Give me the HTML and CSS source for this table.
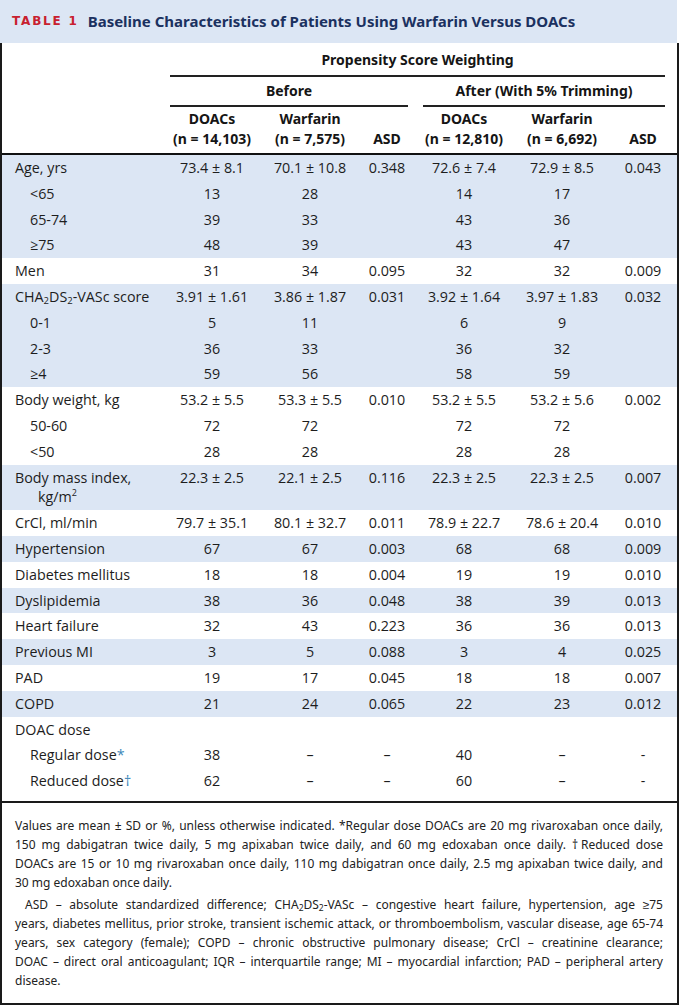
FILE: index.html
```html
<!DOCTYPE html>
<html lang="en">
<head>
<meta charset="utf-8">
<title>Table 1</title>
<link rel="stylesheet" href="styles.css">
</head>
<body>
<div class="page">
  <div class="title-band">
    <span class="t-label">TABLE 1</span>
    <span class="t-text">Baseline Characteristics of Patients Using Warfarin Versus DOACs</span>
  </div>
  <div class="frame">
    <table class="data">
      <colgroup>
        <col class="c-label"><col class="c-n"><col class="c-w"><col class="c-asd"><col class="c-w"><col class="c-n"><col class="c-asd2">
      </colgroup>
      <thead>
        <tr class="h1">
          <th></th>
          <th colspan="6"><div class="grp grp-all">Propensity Score Weighting</div></th>
        </tr>
        <tr class="h2">
          <th></th>
          <th colspan="3"><div class="grp grp-before">Before</div></th>
          <th colspan="3"><div class="grp grp-after">After (With 5% Trimming)</div></th>
        </tr>
        <tr class="h3">
          <th></th>
          <th>DOACs<br>(n = 14,103)</th>
          <th>Warfarin<br>(n = 7,575)</th>
          <th class="asd">ASD</th>
          <th>DOACs<br>(n = 12,810)</th>
          <th>Warfarin<br>(n = 6,692)</th>
          <th class="asd">ASD</th>
        </tr>
      </thead>
      <tbody>
        <tr class="blue"><td class="lab">Age, yrs</td><td>73.4 ± 8.1</td><td>70.1 ± 10.8</td><td>0.348</td><td>72.6 ± 7.4</td><td>72.9 ± 8.5</td><td>0.043</td></tr>
        <tr class="blue"><td class="lab sub">&lt;65</td><td>13</td><td>28</td><td></td><td>14</td><td>17</td><td></td></tr>
        <tr class="blue"><td class="lab sub">65-74</td><td>39</td><td>33</td><td></td><td>43</td><td>36</td><td></td></tr>
        <tr class="blue"><td class="lab sub">≥75</td><td>48</td><td>39</td><td></td><td>43</td><td>47</td><td></td></tr>
        <tr><td class="lab">Men</td><td>31</td><td>34</td><td>0.095</td><td>32</td><td>32</td><td>0.009</td></tr>
        <tr class="blue"><td class="lab">CHA<sub>2</sub>DS<sub>2</sub>-VASc score</td><td>3.91 ± 1.61</td><td>3.86 ± 1.87</td><td>0.031</td><td>3.92 ± 1.64</td><td>3.97 ± 1.83</td><td>0.032</td></tr>
        <tr class="blue"><td class="lab sub">0-1</td><td>5</td><td>11</td><td></td><td>6</td><td>9</td><td></td></tr>
        <tr class="blue"><td class="lab sub">2-3</td><td>36</td><td>33</td><td></td><td>36</td><td>32</td><td></td></tr>
        <tr class="blue"><td class="lab sub">≥4</td><td>59</td><td>56</td><td></td><td>58</td><td>59</td><td></td></tr>
        <tr><td class="lab">Body weight, kg</td><td>53.2 ± 5.5</td><td>53.3 ± 5.5</td><td>0.010</td><td>53.2 ± 5.5</td><td>53.2 ± 5.6</td><td>0.002</td></tr>
        <tr><td class="lab sub">50-60</td><td>72</td><td>72</td><td></td><td>72</td><td>72</td><td></td></tr>
        <tr><td class="lab sub">&lt;50</td><td>28</td><td>28</td><td></td><td>28</td><td>28</td><td></td></tr>
        <tr class="blue"><td class="lab">Body mass index,<br><span class="cont">kg/m<sup>2</sup></span></td><td>22.3 ± 2.5</td><td>22.1 ± 2.5</td><td>0.116</td><td>22.3 ± 2.5</td><td>22.3 ± 2.5</td><td>0.007</td></tr>
        <tr><td class="lab">CrCl, ml/min</td><td>79.7 ± 35.1</td><td>80.1 ± 32.7</td><td>0.011</td><td>78.9 ± 22.7</td><td>78.6 ± 20.4</td><td>0.010</td></tr>
        <tr class="blue"><td class="lab">Hypertension</td><td>67</td><td>67</td><td>0.003</td><td>68</td><td>68</td><td>0.009</td></tr>
        <tr><td class="lab">Diabetes mellitus</td><td>18</td><td>18</td><td>0.004</td><td>19</td><td>19</td><td>0.010</td></tr>
        <tr class="blue"><td class="lab">Dyslipidemia</td><td>38</td><td>36</td><td>0.048</td><td>38</td><td>39</td><td>0.013</td></tr>
        <tr><td class="lab">Heart failure</td><td>32</td><td>43</td><td>0.223</td><td>36</td><td>36</td><td>0.013</td></tr>
        <tr class="blue"><td class="lab">Previous MI</td><td>3</td><td>5</td><td>0.088</td><td>3</td><td>4</td><td>0.025</td></tr>
        <tr><td class="lab">PAD</td><td>19</td><td>17</td><td>0.045</td><td>18</td><td>18</td><td>0.007</td></tr>
        <tr class="blue"><td class="lab">COPD</td><td>21</td><td>24</td><td>0.065</td><td>22</td><td>23</td><td>0.012</td></tr>
        <tr><td class="lab">DOAC dose</td><td></td><td></td><td></td><td></td><td></td><td></td></tr>
        <tr><td class="lab sub">Regular dose<span class="fn">*</span></td><td>38</td><td>–</td><td>–</td><td>40</td><td>–</td><td>-</td></tr>
        <tr><td class="lab sub">Reduced dose<span class="fn">†</span></td><td>62</td><td>–</td><td>–</td><td>60</td><td>–</td><td>-</td></tr>
      </tbody>
    </table>
    <div class="notes">
      <p class="para">
        <span class="ln">Values are mean ± SD or %, unless otherwise indicated. *Regular dose DOACs are 20 mg rivaroxaban once daily,</span>
        <span class="ln">150 mg dabigatran twice daily, 5 mg apixaban twice daily, and 60 mg edoxaban once daily. †Reduced dose</span>
        <span class="ln">DOACs are 15 or 10 mg rivaroxaban once daily, 110 mg dabigatran once daily, 2.5 mg apixaban twice daily, and</span>
        <span class="ln last">30 mg edoxaban once daily.</span>
      </p>
      <p class="para para2">
        <span class="ln first">ASD – absolute standardized difference; CHA<sub>2</sub>DS<sub>2</sub>-VASc – congestive heart failure, hypertension, age ≥75</span>
        <span class="ln">years, diabetes mellitus, prior stroke, transient ischemic attack, or thromboembolism, vascular disease, age 65-74</span>
        <span class="ln">years, sex category (female); COPD – chronic obstructive pulmonary disease; CrCl – creatinine clearance;</span>
        <span class="ln">DOAC – direct oral anticoagulant; IQR – interquartile range; MI – myocardial infarction; PAD – peripheral artery</span>
        <span class="ln last">disease.</span>
      </p>
    </div>
  </div>
</div>
</body>
</html>
```

FILE: styles.css
```css
html, body {
  margin: 0;
  padding: 0;
  background: #ffffff;
}
body {
  font-family: "Open Sans", "Noto Sans", sans-serif;
  color: #1d1d1d;
}
.page {
  width: 679px;
}
.title-band {
  width: 677px;
  height: 43px;
  box-sizing: border-box;
  background: #dce6f4;
  display: flex;
  align-items: center;
  gap: 9px;
  padding: 0 0 2px 12px;
}
.t-label {
  font-family: "DejaVu Sans", sans-serif;
  font-weight: 700;
  font-size: 12px;
  letter-spacing: 1.8px;
  color: #c8202f;
}
.t-text {
  font-family: "Noto Sans", sans-serif;
  font-stretch: condensed;
  font-weight: 700;
  font-size: 15px;
  color: #1b3160;
}
.frame {
  width: 679px;
  height: 962px;
  box-sizing: border-box;
  border: 2px solid #1a1a1a;
  border-top: 0;
  display: flex;
  flex-direction: column;
}
.data {
  width: 675px;
  table-layout: fixed;
  border-collapse: separate;
  border-spacing: 0;
  margin-bottom: 7px;
}
.c-label { width: 163px; }
.c-n { width: 94px; }
.c-w { width: 102px; }
.c-asd { width: 52px; }
.c-asd2 { width: 68px; }

thead th {
  font-family: "Noto Sans", sans-serif;
  font-stretch: condensed;
  font-weight: 700;
  font-size: 14px;
  line-height: 18px;
  color: #151515;
  text-align: center;
  padding: 0;
}
.h1 th { padding-top: 8px; }
.grp { border-bottom: 2px solid #222; }
.grp-all { margin: 0 12px 0 5px; padding-bottom: 6px; }
.h2 th { padding-top: 5px; }
.grp-before { margin: 0 5px; padding-bottom: 5px; }
.grp-after { margin: 0 12px 0 10px; padding-bottom: 5px; }
.h3 th {
  line-height: 20px;
  padding-top: 2px;
  padding-bottom: 4px;
  border-bottom: 2px solid #111;
  vertical-align: bottom;
}

tbody td {
  font-size: 14.3px;
  line-height: 19.8px;
  padding: 3px 0;
  text-align: center;
  vertical-align: top;
  white-space: nowrap;
}
tbody tr.blue td { background: #dce6f4; }
tbody td.lab {
  text-align: left;
  padding-left: 13px;
}
tbody td.sub { padding-left: 28px; }
.cont { padding-left: 23px; }
.cont sup { font-size: 9px; line-height: 0; vertical-align: 6px; }
sub {
  font-size: 9.5px;
  line-height: 0;
  vertical-align: -2px;
}
.fn { color: #3a86b8; }

.notes {
  border-top: 2px solid #1a1a1a;
  padding: 13px 14px 0 13px;
  font-family: "Noto Sans", sans-serif;
  font-stretch: condensed;
  font-size: 12px;
  color: #222;
}
.para { margin: 0; }
.para2 { margin-top: 3px; }
.ln {
  display: block;
  line-height: 19px;
  text-align: justify;
  text-align-last: justify;
  white-space: nowrap;
}
.ln.last { text-align-last: left; }
.ln.first { text-indent: 10px; }
.notes sub { font-size: 8.5px; }
```
